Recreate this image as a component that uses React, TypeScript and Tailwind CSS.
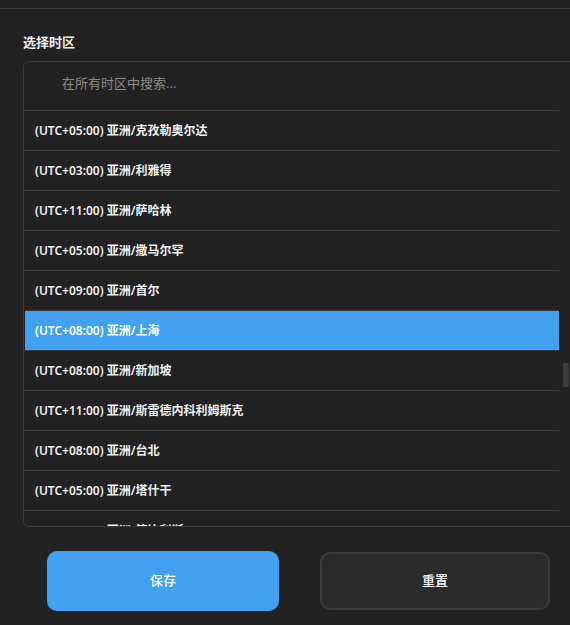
const zones = [
  "(UTC+05:00) 亚洲/克孜勒奥尔达",
  "(UTC+03:00) 亚洲/利雅得",
  "(UTC+11:00) 亚洲/萨哈林",
  "(UTC+05:00) 亚洲/撒马尔罕",
  "(UTC+09:00) 亚洲/首尔",
  "(UTC+08:00) 亚洲/上海",
  "(UTC+08:00) 亚洲/新加坡",
  "(UTC+11:00) 亚洲/斯雷德内科利姆斯克",
  "(UTC+08:00) 亚洲/台北",
  "(UTC+05:00) 亚洲/塔什干",
  "(UTC+04:00) 亚洲/第比利斯",
];

export default function App() {
  return (
    <div
      className="w-[570px] h-[625px] overflow-hidden bg-[#222222] text-white"
      style={{ fontFamily: '"Noto Sans", "Noto Sans CJK SC", sans-serif' }}
    >
      <div className="h-[9px] border-b border-[#3a3a3a]" />
      <div className="pl-[23px] pt-[24px]">
        <div className="text-[13px] font-bold leading-[18px] text-[#eeeeee]">选择时区</div>
        <div className="mt-[10px] w-[570px] h-[466px] rounded-tl-[6px] rounded-bl-[6px] border border-[#3a3a3a] overflow-hidden flex">
          <div className="w-[535px] shrink-0 flex flex-col">
            <div className="h-[48px] shrink-0 flex items-center pl-[38px] pb-[5px] text-[13px] text-[#8a8a8a]">
              在所有时区中搜索...
            </div>
            {zones.map((z, i) => (
              <div
                key={z}
                className={
                  "h-[40px] shrink-0 flex items-center text-[12px] font-semibold border-t border-[#3a3a3a] " +
                  (i === 5 ? "bg-[#42a2f1] text-white ml-[1px] pl-[10px]" : "text-[#f0f0f0] pl-[11px]")
                }
              >
                {z}
              </div>
            ))}
          </div>
          <div className="w-[10px] shrink-0 pt-[301px] pl-[4px]">
            <div className="w-[6px] h-[24px] bg-[#3d3d3d]" />
          </div>
        </div>
      </div>
      <div className="flex mt-[24px] pl-[47px] gap-[41px]">
        <button className="w-[232px] h-[60px] rounded-[10px] bg-[#42a2f1] text-[13px] font-medium text-white">
          保存
        </button>
        <button className="w-[230px] h-[58px] mt-[1px] rounded-[10px] bg-[#2b2b2b] border-2 border-[#3a3a3a] text-[13px] font-medium text-white">
          重置
        </button>
      </div>
    </div>
  );
}
